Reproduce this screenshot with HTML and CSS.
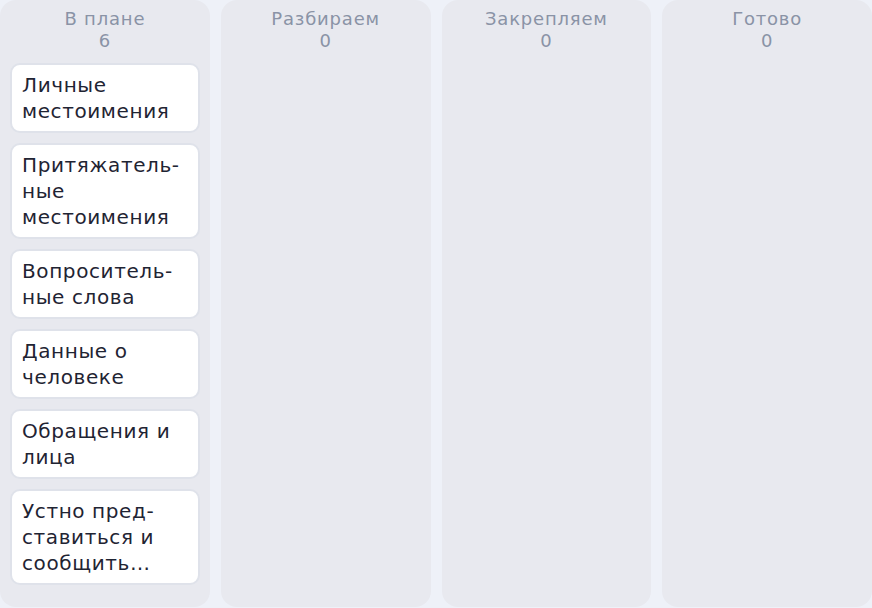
FILE: index.html
```html
<!DOCTYPE html>
<html lang="ru">
<head>
    <meta charset="UTF-8">
    <meta name="viewport" content="width=device-width, initial-scale=1.0">
    <title>Доска тем</title>
    <link rel="stylesheet" href="styles.css">
</head>
<body>
    <div class="board">
        <div class="column">
            <div class="column-head">
                <div class="column-title">В плане</div>
                <div class="column-count">6</div>
            </div>
            <div class="cards">
                <div class="card">Личные местоимения</div>
                <div class="card">Притяжатель&shy;ные местоимения</div>
                <div class="card">Вопроситель&shy;ные слова</div>
                <div class="card">Данные о человеке</div>
                <div class="card">Обращения и лица</div>
                <div class="card">Устно пред&shy;ставиться и сообщить…</div>
            </div>
        </div>

        <div class="column">
            <div class="column-head">
                <div class="column-title">Разбираем</div>
                <div class="column-count">0</div>
            </div>
        </div>

        <div class="column">
            <div class="column-head">
                <div class="column-title">Закрепляем</div>
                <div class="column-count">0</div>
            </div>
        </div>

        <div class="column">
            <div class="column-head">
                <div class="column-title">Готово</div>
                <div class="column-count">0</div>
            </div>
        </div>
    </div>
</body>
</html>
```

FILE: styles.css
```css
body {
    margin: 0;
    background: #eef1f8;
    font-family: "DejaVu Sans", Verdana, sans-serif;
}

.board {
    display: grid;
    grid-template-columns: repeat(4, 1fr);
    gap: 11px;
    width: 872px;
    height: 607px;
}

.column {
    background: #e8e9ef;
    border-radius: 16px;
    padding: 8px 10px;
}

.column-head {
    text-align: center;
    color: #8a93a6;
    font-size: 18px;
    line-height: 22px;
    letter-spacing: 0.8px;
    margin-bottom: 11px;
}

.cards {
    display: flex;
    flex-direction: column;
    gap: 10px;
}

.card {
    background: #ffffff;
    border: 2px solid #dfe2ea;
    border-radius: 10px;
    padding: 7px 10px;
    color: #1f2433;
    font-size: 20px;
    line-height: 26px;
    letter-spacing: 0.6px;
    hyphens: manual;
}
```
